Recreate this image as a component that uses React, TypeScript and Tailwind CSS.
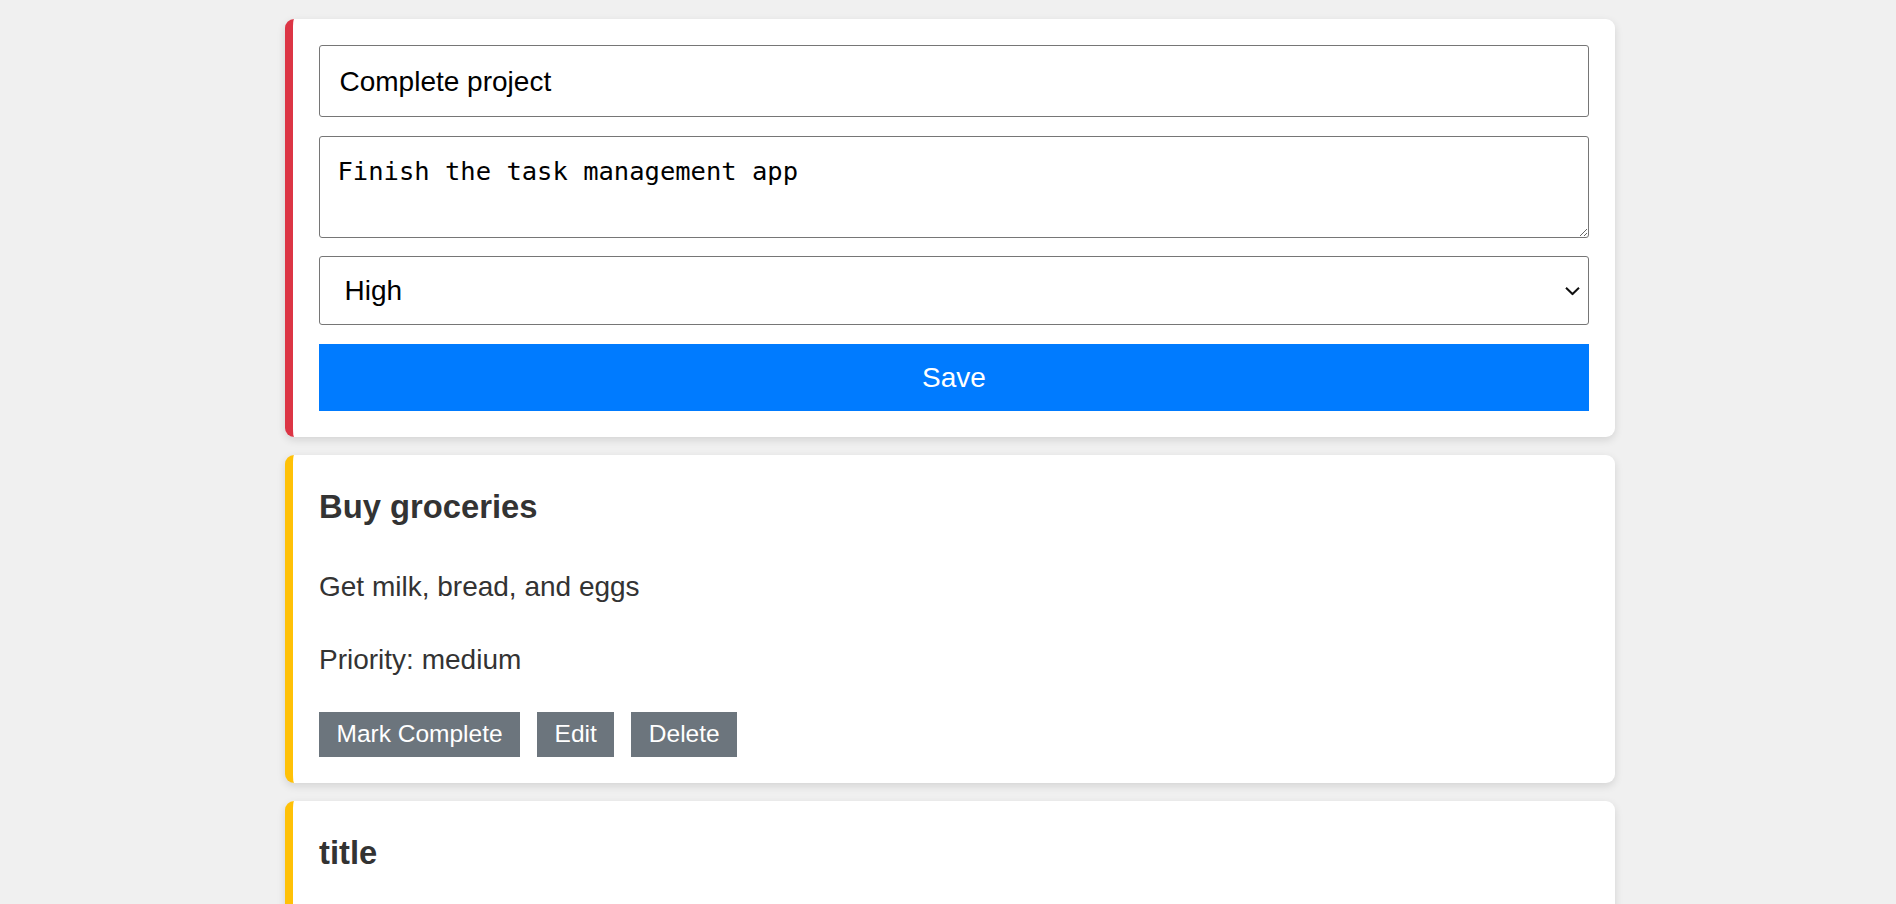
import { useState } from "react";

type Task = {
  id: number;
  title: string;
  description: string;
  priority: "low" | "medium" | "high";
};

const tasks: Task[] = [
  { id: 2, title: "Buy groceries", description: "Get milk, bread, and eggs", priority: "medium" },
  { id: 3, title: "title", description: "description", priority: "medium" },
];

const borderFor: Record<Task["priority"], string> = {
  high: "border-[#dc3545]",
  medium: "border-[#ffc107]",
  low: "border-[#28a745]",
};

function EditForm() {
  const [title, setTitle] = useState("Complete project");
  const [desc, setDesc] = useState("Finish the task management app");
  const [priority, setPriority] = useState("high");

  return (
    <div className="rounded-[9px] border-l-[8px] border-[#dc3545] bg-white p-[26px] shadow-[0_3px_9px_rgba(0,0,0,0.12)]">
      <form className="flex flex-col" onSubmit={(e) => e.preventDefault()}>
        <input
          value={title}
          onChange={(e) => setTitle(e.target.value)}
          className="h-[72px] w-full rounded-[3px] border border-[#767676] px-[19.5px] pt-[2px] text-[28px] text-black outline-none"
        />
        <textarea
          value={desc}
          onChange={(e) => setDesc(e.target.value)}
          className="mt-[19px] block h-[102px] w-full rounded-[3px] border border-[#767676] px-[17.5px] pt-[19px] pb-[10px] font-['DejaVu_Sans_Mono',monospace] text-[25.5px] leading-[1.2] text-black outline-none"
        />
        <div className="relative mt-[18px]">
          <select
            value={priority}
            onChange={(e) => setPriority(e.target.value)}
            className="h-[69px] w-full appearance-none rounded-[3px] border border-[#767676] bg-white pl-[24.5px] text-[28px] text-black outline-none"
          >
            <option value="low">Low</option>
            <option value="medium">Medium</option>
            <option value="high">High</option>
          </select>
          <svg
            className="pointer-events-none absolute right-[9px] top-1/2 -translate-y-1/2"
            width="15"
            height="9"
            viewBox="0 0 15 9"
            fill="none"
          >
            <path d="M1 1.2l6.5 6.3L14 1.2" stroke="#111" strokeWidth="2" />
          </svg>
        </div>
        <button
          type="submit"
          className="mt-[19px] h-[67px] w-full bg-[#007bff] text-[28px] text-white"
        >
          Save
        </button>
      </form>
    </div>
  );
}

function TaskCard({ task }: { task: Task }) {
  return (
    <div
      className={`rounded-[9px] border-l-[8px] ${borderFor[task.priority]} bg-white p-[26px] text-[#333] shadow-[0_3px_9px_rgba(0,0,0,0.12)]`}
    >
      <h3 className="text-[32.76px] font-bold leading-[1.6]">{task.title}</h3>
      <p className="mt-[32px] text-[28px] leading-[1.6]">{task.description}</p>
      <p className="mt-[28px] text-[28px] leading-[1.6]">Priority: {task.priority}</p>
      <div className="mt-[29px] flex gap-[17px]">
        <button className="h-[45px] bg-[#6c757d] px-[17.5px] text-[24.5px] text-white">Mark Complete</button>
        <button className="h-[45px] bg-[#6c757d] px-[17.5px] text-[24.5px] text-white">Edit</button>
        <button className="h-[45px] bg-[#6c757d] px-[17.5px] text-[24.5px] text-white">Delete</button>
      </div>
    </div>
  );
}

export default function App() {
  return (
    <div className="min-h-screen bg-[#f0f0f0] pb-[40px] pt-[19px] font-['Liberation_Sans',Arial,sans-serif]">
      <div className="ml-[285px] flex w-[1330px] flex-col gap-[18px]">
        <EditForm />
        {tasks.map((t) => (
          <TaskCard key={t.id} task={t} />
        ))}
      </div>
    </div>
  );
}
